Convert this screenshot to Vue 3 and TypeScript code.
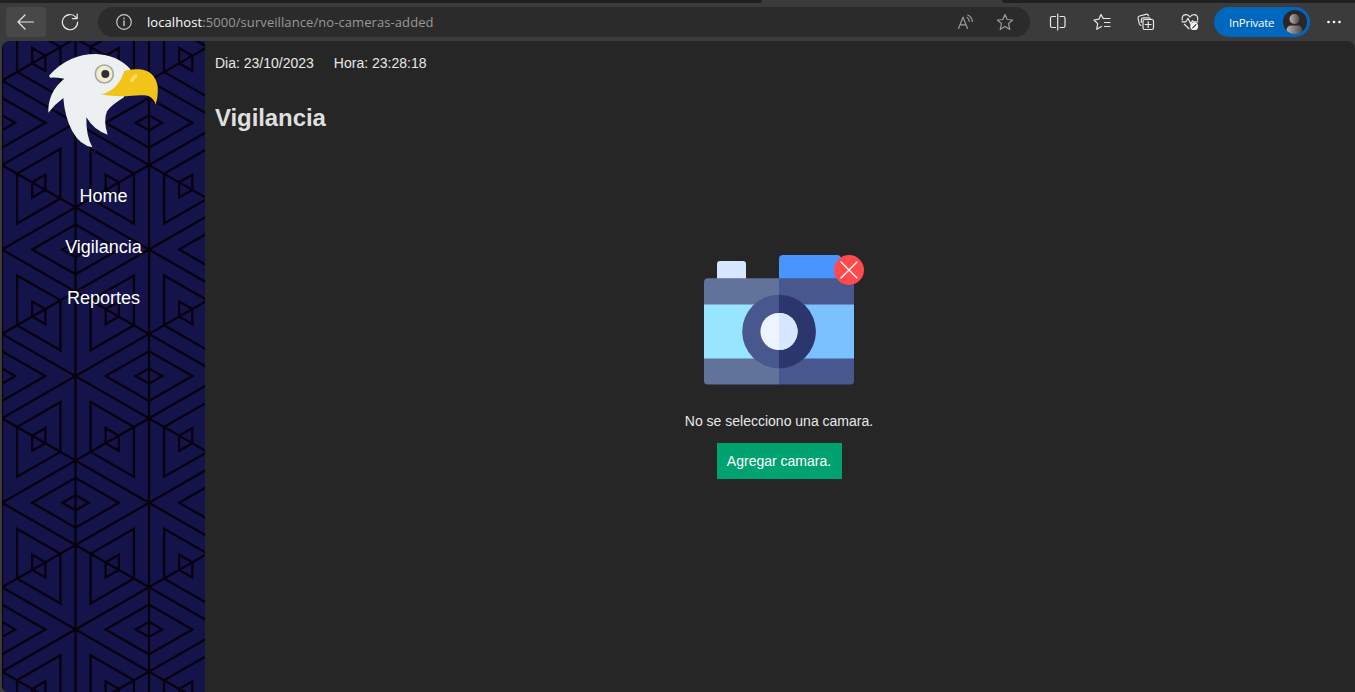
<script setup lang="ts">
const links: string[] = ['Home', 'Vigilancia', 'Reportes']

// Isometric wallpaper: a triangular lattice with nested rhombi.
const COL = 73.5
const ROW = 84.43
type Pt = [number, number]

const poly = (cx: number, cy: number, pts: Pt[], k: number): string =>
  'M' + pts.map(([x, y]) => `${(cx + x * k).toFixed(2)} ${(cy + y * k).toFixed(2)}`).join('L') + 'Z'

const flat: Pt[] = [[-COL, 0], [0, -ROW / 2], [COL, 0], [0, ROW / 2]]
const rising: Pt[] = [[-COL / 2, -ROW / 4], [COL / 2, -ROW * 0.75], [COL / 2, ROW / 4], [-COL / 2, ROW * 0.75]]
const falling: Pt[] = rising.map(([x, y]): Pt => [-x, y])

function buildLines(): string {
  let d = ''
  for (let c = 0; c <= 3; c++) d += `M${c * COL} 0V660`
  for (let i = -3; i < 12; i++) {
    const y = -44.8 + i * ROW
    d += `M0 ${y}L${COL * 3} ${y + ROW * 1.5}M0 ${y}L${COL * 3} ${y - ROW * 1.5}`
  }
  return d
}

function buildRhombi(): string {
  let d = ''
  for (let row = 0; row < 7; row++) {
    const y = 18.5 + row * ROW * 1.5
    for (let c = 0; c < 3; c++) {
      const shape = (c + row) % 2 === 0 ? falling : rising
      for (const k of [0.59, 0.18]) d += poly((c + 0.5) * COL, y, shape, k)
    }
    for (let c = 0; c < 4; c++) {
      if ((c + row) % 2 === 1) continue
      for (const k of [0.59, 0.18]) d += poly(c * COL, y + ROW * 0.75, flat, k)
    }
  }
  return d
}

const latticePath = buildLines()
const rhombiPath = buildRhombi()
</script>

<template>
  <div class="window">
    <header class="chrome">
      <div class="tabs"><i class="tab-left"></i><i class="tab-right"></i></div>
      <div class="toolbar">
        <div class="back">
          <svg width="18" height="16" viewBox="0 0 18 16"><path d="M16.500 8H1M8 1L1 8l7 7" /></svg>
        </div>
        <svg class="reload" width="18" height="18" viewBox="0 0 18 18"><path d="M16.600 9A7.600 7.600 0 1 1 14.800 4.200L16 5.400M16.200 1v4.600h-4.800" /></svg>
        <div class="address">
          <svg class="info" width="16" height="16" viewBox="0 0 16 16"><circle cx="8" cy="8" r="7.300" /><path d="M8 7v4.500M8 4.300v.5" stroke-width="1.400" /></svg>
          <span class="url"><b>localhost</b>:5000/surveillance/no-cameras-added</span>
          <svg class="read" width="18" height="17" viewBox="0 0 18 17"><path d="M1.500 14.500L6 3.200l4.500 11.300M3 10.800h6M10 3.300q2 1.400 2.200 4M10.800 1q4.200 2 4.500 6.500" /></svg>
          <svg class="star" width="18" height="18" viewBox="0 0 18 18"><path d="M9 1.500l2.200 5 5.400.5-4.100 3.600 1.300 5.900L9 13.600l-4.800 2.900 1.300-5.900L1.400 7l5.400-.5z" /></svg>
        </div>
        <div class="tools">
          <svg width="18" height="18" viewBox="0 0 18 18"><path d="M6.500 3.500H3Q1.500 3.500 1.500 5v8q0 1.500 1.500 1.500h3.500M11 3.500h3.500q1.500 0 1.500 1.500v8q0 1.500-1.500 1.500H11M8.700 1v16" /></svg>
          <svg width="18" height="18" viewBox="0 0 18 18"><path d="M10.500 5.500H17M11.500 9.500H17M11.500 13.500H17M10.200 5.500L8 1.500 5.900 6.200 1 7l3.700 3.700-1 5.600 4.800-2.700" /></svg>
          <svg width="18" height="18" viewBox="0 0 18 18"><path d="M4 12.500Q2.500 12 2.100 10L1.100 5.400Q.8 3.500 2.600 3L8.800 1.300q2-.4 2.700 1.500M4.300 9.500V7q0-2.200 2.200-2.200h4.600q2 0 2.200.8" /><rect x="6" y="6.500" width="10.500" height="10" rx="1.800" /><path d="M11.200 8.500v6M8.200 11.500h6" /></svg>
          <svg width="18" height="18" viewBox="0 0 18 18"><path d="M1.300 7Q.5 2.200 4.700 1.700 7.500 1.500 9 4 10.500 1.500 13.400 1.700 17.300 2.200 16.600 7M1 8.800h4l2-3.500 2.600 5.400 1.800-3 1.200 1.100h4.200M3.300 11.300l4.700 4.500" /><circle class="solid" cx="13.200" cy="13.200" r="3.900" /><path class="tick" d="M11.700 14.800l3.200-3.200" /></svg>
        </div>
        <div class="profile">
          <span>InPrivate</span>
          <svg width="24" height="24" viewBox="0 0 24 24">
            <defs>
              <linearGradient id="skin"><stop offset="0" stop-color="#b9b5b2" /><stop offset="1" stop-color="#4a4643" /></linearGradient>
              <clipPath id="disc"><circle cx="12" cy="12" r="12" /></clipPath>
            </defs>
            <g clip-path="url(#disc)"><rect width="24" height="24" fill="#292827" /><circle cx="11.500" cy="9" r="5" fill="url(#skin)" /><path d="M3.500 24v-3q0-5.500 5-5.500h6q5 0 5 5.500v3z" fill="url(#skin)" /></g>
          </svg>
        </div>
        <svg class="more" width="16" height="4" viewBox="0 0 16 4"><circle cx="2.500" cy="2" r="1.300" /><circle cx="8" cy="2" r="1.300" /><circle cx="13.500" cy="2" r="1.300" /></svg>
      </div>
    </header>

    <div class="page">
      <aside class="sidebar">
        <svg class="wallpaper" width="203" height="651" viewBox="0 0 203 651">
          <path :d="latticePath" />
          <path :d="rhombiPath" />
        </svg>
        <svg class="eagle" width="115" height="100" viewBox="135 36 345 300">
          <path fill="#ecf0f1" d="M148 112Q205 48 288 48Q350 50 391 93L372 178Q333 202 321 220Q309 250 323 290Q282 277 259 238Q258 294 277 328Q240 322 217 280Q194 237 190 180Q163 200 145 224Q143 162 193 122Q163 117 151 119Q147 117 148 112Z" />
          <path fill="#f0c419" d="M373 99Q391 92 418 94Q463 97 473 144Q475 176 467 199Q458 174 434 172C400 169 372 182 303 169Q354 158 373 99Z" />
          <path d="M395 127L406 114" stroke="#ffd966" stroke-width="11" stroke-linecap="round" />
          <circle cx="313" cy="108" r="27" fill="#f3ecca" stroke="#a6a8a8" stroke-width="5" />
          <circle cx="316" cy="108" r="12" fill="#2c2f38" />
        </svg>
        <nav>
          <a v-for="link in links" :key="link">{{ link }}</a>
        </nav>
      </aside>

      <main>
        <div class="clock"><span>Dia: 23/10/2023</span><span>Hora: 23:28:18</span></div>
        <h1>Vigilancia</h1>
        <section class="empty">
          <svg class="camera" width="160" height="130" viewBox="0 0 160 130">
            <path fill="#d6e7ff" d="M13 24V9q0-3 3-3h23q3 0 3 3v15z" />
            <path fill="#4895ff" d="M75 24V4q0-4 4-4h54q4 0 4 4v20z" />
            <path fill="#61729b" d="M75 23.300H4q-4 0-4 4V126q0 3.500 4 3.500h71z" />
            <path fill="#48578e" d="M75 23.300h71q4 0 4 4V126q0 3.500-4 3.500H75z" />
            <path fill="#98e5ff" d="M0 49.500h75v54H0z" />
            <path fill="#7bc0ff" d="M75 49.500h75v54H75z" />
            <circle cx="75" cy="76.500" r="36.800" fill="#48578e" />
            <path fill="#2b366d" d="M75 39.700a36.800 36.800 0 0 1 0 73.600z" />
            <circle cx="75" cy="76.500" r="18.600" fill="#ebf4ff" />
            <path fill="#d6e7ff" d="M75 57.900a18.600 18.600 0 0 1 0 37.200z" />
            <circle cx="145" cy="15" r="15" fill="#ff4b4e" />
            <path d="M137 7l16 16M153 7l-16 16" stroke="#fff" stroke-width="1.200" stroke-linecap="round" />
          </svg>
          <p>No se selecciono una camara.</p>
          <button>Agregar camara.</button>
        </section>
      </main>
    </div>
  </div>
</template>

<style>
body {
  background: #3b3b3b;
  overflow: hidden;
}
</style>

<style scoped>
.window {
  width: 1355px;
  height: 692px;
  display: flex;
  flex-direction: column;
  overflow: hidden;
  background: #3b3b3b;
  font-family: "Liberation Sans", Arial, sans-serif;
}
svg {
  display: block;
  flex: none;
}
.chrome {
  height: 41px;
  flex: none;
  font-family: "Open Sans", "Noto Sans", sans-serif;
}
.tabs {
  height: 3px;
  display: flex;
  justify-content: space-between;
}
.tab-left {
  width: 762px;
  background: #202020;
  border-bottom-right-radius: 3px;
}
.tab-right {
  width: 353px;
  background: #202020;
  border-bottom-left-radius: 3px;
}
.toolbar {
  height: 38px;
  display: flex;
  align-items: center;
  padding-left: 6px;
}
.toolbar svg {
  fill: none;
  stroke: #e8e8e8;
  stroke-width: 1.2;
  stroke-linejoin: round;
  stroke-linecap: round;
}
.back {
  width: 40px;
  height: 30px;
  border-radius: 4px;
  background: #484848;
  display: flex;
  align-items: center;
  justify-content: center;
}
.reload {
  margin-left: 15px;
}
.address {
  margin-left: 19px;
  width: 932px;
  height: 30px;
  border-radius: 15px;
  background: #2b2b2b;
  display: flex;
  align-items: center;
  box-sizing: border-box;
  padding: 0 16px 0 18px;
}
.url {
  margin-left: 15px;
  flex: 1;
  font-size: 13px;
  letter-spacing: 0.08px;
  line-height: 18px;
  color: #989898;
  white-space: nowrap;
}
.url b {
  font-weight: 400;
  color: #fff;
}
.address .info {
  stroke: #c8c8c8;
}
.address .read,
.address .star {
  stroke: #9a9a9a;
}
.star {
  margin-left: 21px;
}
.tools {
  margin-left: 19px;
  display: flex;
  gap: 26px;
}
.tools .solid {
  fill: #f4f4f4;
  stroke: none;
}
.tools .tick {
  stroke: #3b3b3b;
}
.profile {
  margin-left: 15px;
  width: 96px;
  height: 30px;
  border-radius: 15px;
  background: #0067bf;
  display: flex;
  align-items: center;
  justify-content: space-between;
  box-sizing: border-box;
  padding: 0 3px 0 15px;
  color: #fff;
  font-size: 11.5px;
  letter-spacing: -0.25px;
}
.toolbar .profile svg,
.toolbar .profile svg * {
  stroke: none;
}
.toolbar .more {
  margin-left: 16px;
  fill: #fff;
  stroke: none;
}
.page {
  height: 651px;
  margin-left: 2px;
  display: flex;
  border-radius: 8px 8px 0 6px;
  overflow: hidden;
  background: #262626;
}
.sidebar {
  position: relative;
  width: 203px;
  flex: none;
  background: #14144b;
  overflow: hidden;
}
.wallpaper {
  position: absolute;
  inset: 0;
  fill: none;
  stroke: #070110;
  stroke-width: 2.3;
}
.eagle {
  position: relative;
  margin: 9px 0 0 43px;
}
nav {
  position: relative;
  margin-top: 21px;
  display: flex;
  flex-direction: column;
}
nav a {
  height: 51px;
  line-height: 51px;
  text-align: center;
  font-size: 18px;
  color: #fff;
}
main {
  flex: 1;
  color: #e8e8e8;
  padding-left: 10px;
}
.clock {
  display: flex;
  gap: 20px;
  padding-top: 14px;
  font-size: 14px;
  line-height: 16px;
}
h1 {
  margin: 33px 0 0;
  font-size: 24px;
  letter-spacing: -0.08px;
  line-height: 28px;
  color: #dfdfdf;
}
.empty {
  display: flex;
  flex-direction: column;
  align-items: center;
  margin: 123px 0 0 -12px;
}
.camera {
  margin-left: 10px;
}
.empty p {
  margin: 28px 0 14px;
  font-size: 14px;
  line-height: 16px;
}
.empty button {
  width: 125px;
  height: 36px;
  padding: 0;
  border: 0;
  background: #00a26f;
  color: #fff;
  font: 14px "Liberation Sans", Arial, sans-serif;
}
</style>
